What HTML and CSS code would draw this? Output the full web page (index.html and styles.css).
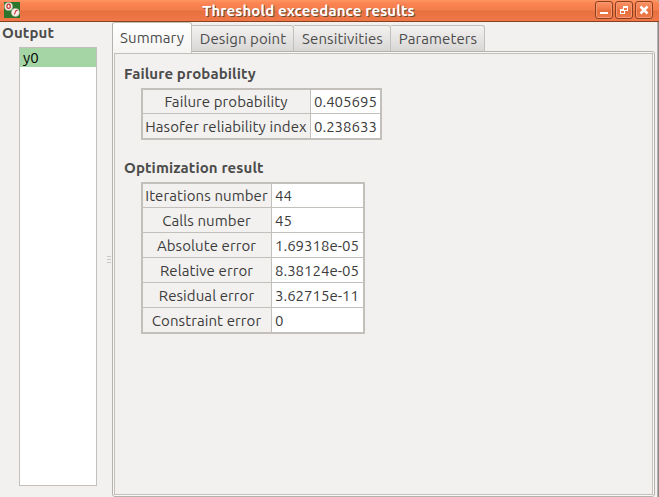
FILE: index.html
```
<!DOCTYPE html>
<html lang="en">
<head>
<meta charset="utf-8">
<title>Threshold exceedance results</title>
<link rel="stylesheet" href="styles.css">
</head>
<body>
<div class="window">
  <header class="titlebar">
    <svg class="app-icon" width="16" height="16" viewBox="0 0 16 16">
      <rect width="16" height="16" fill="#2d742c"/>
      <circle cx="4.6" cy="4.6" r="4" fill="#f8efec" stroke="#a9b59b" stroke-width=".6"/>
      <ellipse cx="4.600" cy="4.200" rx="1.700" ry="2.100" fill="none" stroke="#c8302c" stroke-width="1.2"/>
      <circle cx="11.4" cy="10.4" r="4" fill="#f8efec" stroke="#b7c0a6" stroke-width=".6"/>
      <path d="M10.400 12.400L12 8.400M12 8.600l1.600-.2" fill="none" stroke="#c8302c" stroke-width="1.1"/>
    </svg>
    <h1 class="title">Threshold exceedance results</h1>
    <div class="controls">
      <span class="control"><svg width="16" height="16" viewBox="0 0 16 16"><path d="M4 10h8v2H4z" fill="#fff"/></svg></span>
      <span class="control"><svg width="16" height="16" viewBox="0 0 16 16"><path fill="#fff" fill-rule="evenodd" d="M7 4h5v5H7zM8 6v2h3V6zM4 7h3v2H5v2h3v-2h1v3H4z"/></svg></span>
      <span class="control"><svg width="16" height="16" viewBox="0 0 16 16"><path d="M4.500 4.500l7 7M11.500 4.500l-7 7" fill="none" stroke="#fff" stroke-width="2.500"/></svg></span>
    </div>
  </header>
  <main class="content">
    <aside class="sidebar">
      <h2 class="heading output-heading">Output</h2>
      <ul class="list"><li class="selected">y0</li></ul>
    </aside>
    <div class="splitter"><i></i><i></i><i></i></div>
    <section class="tabs">
      <nav class="tabbar">
        <span class="tab active">Summary</span>
        <span class="tab design">Design point</span>
        <span class="tab sens">Sensitivities</span>
        <span class="tab params">Parameters</span>
      </nav>
      <div class="pane">
        <div class="page">
          <h2 class="heading failure-heading">Failure probability</h2>
          <table class="results failure">
            <tr><th>Failure probability</th><td>0.405695</td></tr>
            <tr><th>Hasofer reliability index</th><td>0.238633</td></tr>
          </table>
          <h2 class="heading optim-heading">Optimization result</h2>
          <table class="results optim">
            <tr><th>Iterations number</th><td>44</td></tr>
            <tr><th>Calls number</th><td>45</td></tr>
            <tr><th>Absolute error</th><td>1.69318e-05</td></tr>
            <tr><th>Relative error</th><td>8.38124e-05</td></tr>
            <tr><th>Residual error</th><td>3.62715e-11</td></tr>
            <tr><th>Constraint error</th><td>0</td></tr>
          </table>
        </div>
      </div>
    </section>
  </main>
</div>
</body>
</html>
```
FILE: styles.css
```
* { box-sizing: border-box; }
body {
  margin: 0;
  font: 15px/20px Ubuntu, "Noto Sans", sans-serif;
  letter-spacing: 0.12px;
  color: #3c3c3c;
  background: #8b8885;
}
.window {
  width: 659px;
  height: 497px;
  display: flex;
  flex-direction: column;
  overflow: hidden;
  border-radius: 0 3px 0 0;
  background: #f2f1ef;
}
.titlebar {
  flex: none;
  height: 22px;
  display: flex;
  align-items: flex-start;
  padding: 0 6px 0 4px;
  background: linear-gradient(#ff9563 0, #fa8250 4px, #f17e4e 10px, #e8703f 11px, #f07748 21px);
  border-bottom: 1px solid #87411f;
}
.app-icon { margin-top: 2px; }
.title {
  flex: 1;
  margin: 1px 0 0 2px;
  font-size: 15px;
  line-height: 20px;
  text-align: center;
  color: #fff;
  text-shadow: 1px 1px 0 #6b4c35;
}
.controls { display: flex; gap: 2px; padding-top: 1px; }
.control {
  width: 18px;
  height: 18px;
  border: 1px solid #893f20;
  border-radius: 3px;
  background: linear-gradient(#fb9264, #ee7849 50%, #e66e3d 51%, #f07a4b);
  box-shadow: inset 0 0 0 1px #f79870;
}
.control svg { display: block; }
.content {
  flex: 1;
  display: flex;
  min-height: 0;
  border-right: 1px solid #8b8885;
  box-shadow: inset -1px 0 0 #b5b2af;
}
.heading { margin: 0; font-size: 15px; line-height: 20px; font-weight: bold; color: #4c4c4c; }
.sidebar { width: 97px; display: flex; flex-direction: column; padding-bottom: 11px; }
.output-heading { margin: 1px 0 4px 2px; }
.list {
  flex: 1;
  margin: 0 0 0 19px;
  padding: 0;
  list-style: none;
  background: #fff;
  border: 1px solid #c3c0bc;
}
.selected { height: 19px; padding-left: 3px; line-height: 20px; color: #000; background: #a5d5a4; }
.splitter {
  width: 15px;
  padding: 0 4px 0 10px;
  display: flex;
  flex-direction: column;
  align-items: flex-start;
  justify-content: center;
  gap: 2px;
}
.splitter i { width: 4px; height: 1px; background: #c9c6c3; }
.tabs { width: 543px; display: flex; flex-direction: column; }
.tabbar { height: 29px; display: flex; align-items: flex-end; }
.tab {
  height: 26px;
  padding-left: 1px;
  border: 1px solid #c3c0bc;
  border-left: 0;
  border-bottom: 0;
  border-radius: 0 3px 0 0;
  text-align: center;
  line-height: 26px;
  letter-spacing: 0.09px;
  white-space: nowrap;
  color: #4c4c4c;
  background: linear-gradient(#f3f2f1, #d9d7d5);
}
.active {
  position: relative;
  width: 80px;
  height: 31px;
  margin-bottom: -2px;
  padding-left: 0;
  border-left: 1px solid #b5b1ad;
  border-radius: 3px 3px 0 0;
  line-height: 30px;
  background: linear-gradient(#fff, #f5f4f3);
}
.design { width: 102px; }
.sens { width: 97px; }
.params { width: 94px; }
.pane {
  flex: 1;
  border: 1px solid #b5b1ad;
  border-radius: 0 3px 3px 3px;
  padding: 1px;
  background: #faf9f8;
}
.page { height: 100%; padding: 10px 0 0 9px; border: 1px solid #c3c0bc; background: #f2f1ef; }
.results {
  margin-left: 17px;
  border-collapse: separate;
  border-spacing: 0;
  border: 2px solid #c3c0bc;
  table-layout: fixed;
  line-height: 23px;
  white-space: nowrap;
}
.results th, .results td { height: 25px; padding: 0; border-bottom: 1px solid #c3c0bc; }
.results tr:first-child > * { height: 24px; }
.results tr:last-child > * { height: 24px; border-bottom: 0; }
.results th {
  padding-right: 1px;
  font-weight: normal;
  text-align: center;
  letter-spacing: 0.09px;
  border-right: 1px solid #c3c0bc;
}
.results td { padding-left: 3px; letter-spacing: 0; background: #fff; }
.failure-heading { margin-bottom: 4px; }
.failure { width: 241px; }
.failure th { width: 168px; }
.optim-heading { margin: 18px 0 4px; }
.optim { width: 224px; }
.optim th { width: 129px; }
```
